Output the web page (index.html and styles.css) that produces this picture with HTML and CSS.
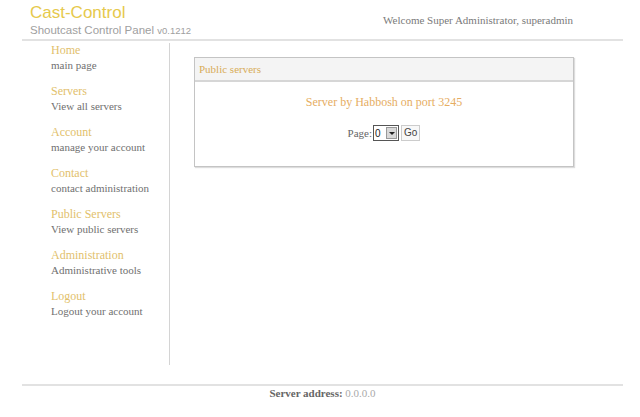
FILE: index.html
```html
<!DOCTYPE html>
<html lang="en">
<head>
  <meta charset="UTF-8">
  <title>Cast-Control</title>
  <link rel="stylesheet" href="styles.css">
</head>
<body>

<div class="page">
  <div class="header">
    <div class="brand">
      <div class="brand-title">Cast-Control</div>
      <div class="brand-sub">Shoutcast Control Panel <span class="version">v0.1212</span></div>
    </div>
    <div class="welcome">Welcome Super Administrator, superadmin</div>
  </div>

  <div class="main">
    <ul class="menu">
      <li><a href="#">Home</a><span>main page</span></li>
      <li><a href="#">Servers</a><span>View all servers</span></li>
      <li><a href="#">Account</a><span>manage your account</span></li>
      <li><a href="#">Contact</a><span>contact administration</span></li>
      <li><a href="#">Public Servers</a><span>View public servers</span></li>
      <li><a href="#">Administration</a><span>Administrative tools</span></li>
      <li><a href="#">Logout</a><span>Logout your account</span></li>
    </ul>

    <div class="content">
      <div class="box">
        <div class="box-head">Public servers</div>
        <div class="box-body">
          <p class="server">Server by Habbosh on port 3245</p>
          <div class="pager">
            Page:
            <span class="select"><span class="select-val">0</span><span class="select-btn"></span></span>
            <span class="go">Go</span>
          </div>
        </div>
      </div>
    </div>
  </div>

  <div class="footer">
    <b>Server address:</b> <span class="addr">0.0.0.0</span>
  </div>
</div>

</body>
</html>
```

FILE: styles.css
```css
body {
  margin: 0;
  background-color: #fff;
  font-family: "Liberation Serif", "Times New Roman", serif;
  color: #666;
}
.page {
  margin: 0 17px 0 22px;
}
.header {
  display: flex;
  justify-content: space-between;
  align-items: flex-start;
  height: 36px;
  padding: 3px 50px 0 8px;
  border-bottom: 2px solid #e2e2e2;
}
.brand-title {
  font-family: "Liberation Sans", Arial, sans-serif;
  font-size: 17px;
  line-height: 20px;
  color: #e6c94c;
}
.brand-sub {
  font-family: "Liberation Sans", Arial, sans-serif;
  font-size: 11.5px;
  line-height: 14px;
  color: #a0a0a0;
}
.version {
  font-size: 9.5px;
}
.welcome {
  font-size: 11px;
  margin-top: 11px;
  color: #7a7a7a;
}
.main {
  display: flex;
  margin-top: 2px;
}
.menu {
  list-style: none;
  margin: 0;
  padding: 0 0 0 29px;
  width: 118px;
  height: 322px;
  border-right: 1px solid #d4d4d4;
}
.menu li {
  display: flex;
  flex-direction: column;
  height: 41px;
}
.menu a {
  font-size: 12px;
  line-height: 15px;
  color: #e2bf6c;
  text-decoration: none;
}
.menu span {
  font-size: 11px;
  line-height: 15px;
  color: #707070;
}
.content {
  flex: 1;
  padding: 14px 0 0 24px;
}
.box {
  width: 378px;
  border: 1px solid #c4c4c4;
  box-shadow: 1px 1px 1px #ddd;
}
.box-head {
  height: 22px;
  line-height: 22px;
  padding-left: 4px;
  background-color: #f4f4f4;
  border-bottom: 2px solid #d6d6d6;
  font-size: 11px;
  color: #d8ac58;
}
.box-body {
  height: 84px;
  text-align: center;
}
.server {
  margin: 0;
  padding-top: 13px;
  font-size: 12px;
  color: #e6ad62;
}
.pager {
  margin-top: 15px;
  font-size: 11px;
  color: #666;
  display: flex;
  justify-content: center;
  align-items: center;
  gap: 1px;
}
.select {
  display: inline-flex;
  align-items: center;
  height: 14px;
  border: 1px solid #555;
  background: #fff;
  padding: 0 1px;
}
.select-val {
  font-family: "Liberation Sans", Arial, sans-serif;
  font-size: 10px;
  color: #222;
  width: 11px;
  text-align: left;
}
.select-btn {
  width: 11px;
  height: 12px;
  background: #d8d8d8;
  border: 1px solid #999;
  box-sizing: border-box;
  position: relative;
}
.select-btn::after {
  content: "";
  position: absolute;
  left: 2px;
  top: 4px;
  border-left: 3px solid transparent;
  border-right: 3px solid transparent;
  border-top: 3px solid #222;
}
.go {
  font-family: "Liberation Sans", Arial, sans-serif;
  font-size: 10px;
  color: #444;
  height: 14px;
  line-height: 14px;
  padding: 0 2px;
  border: 1px solid #ccc;
  background: #f8f8f8;
  margin-left: 1px;
}
.footer {
  margin-top: 19px;
  border-top: 2px solid #e2e2e2;
  text-align: center;
  padding-top: 1px;
  font-size: 11px;
  color: #666;
}
.addr {
  color: #aaa;
}
```
